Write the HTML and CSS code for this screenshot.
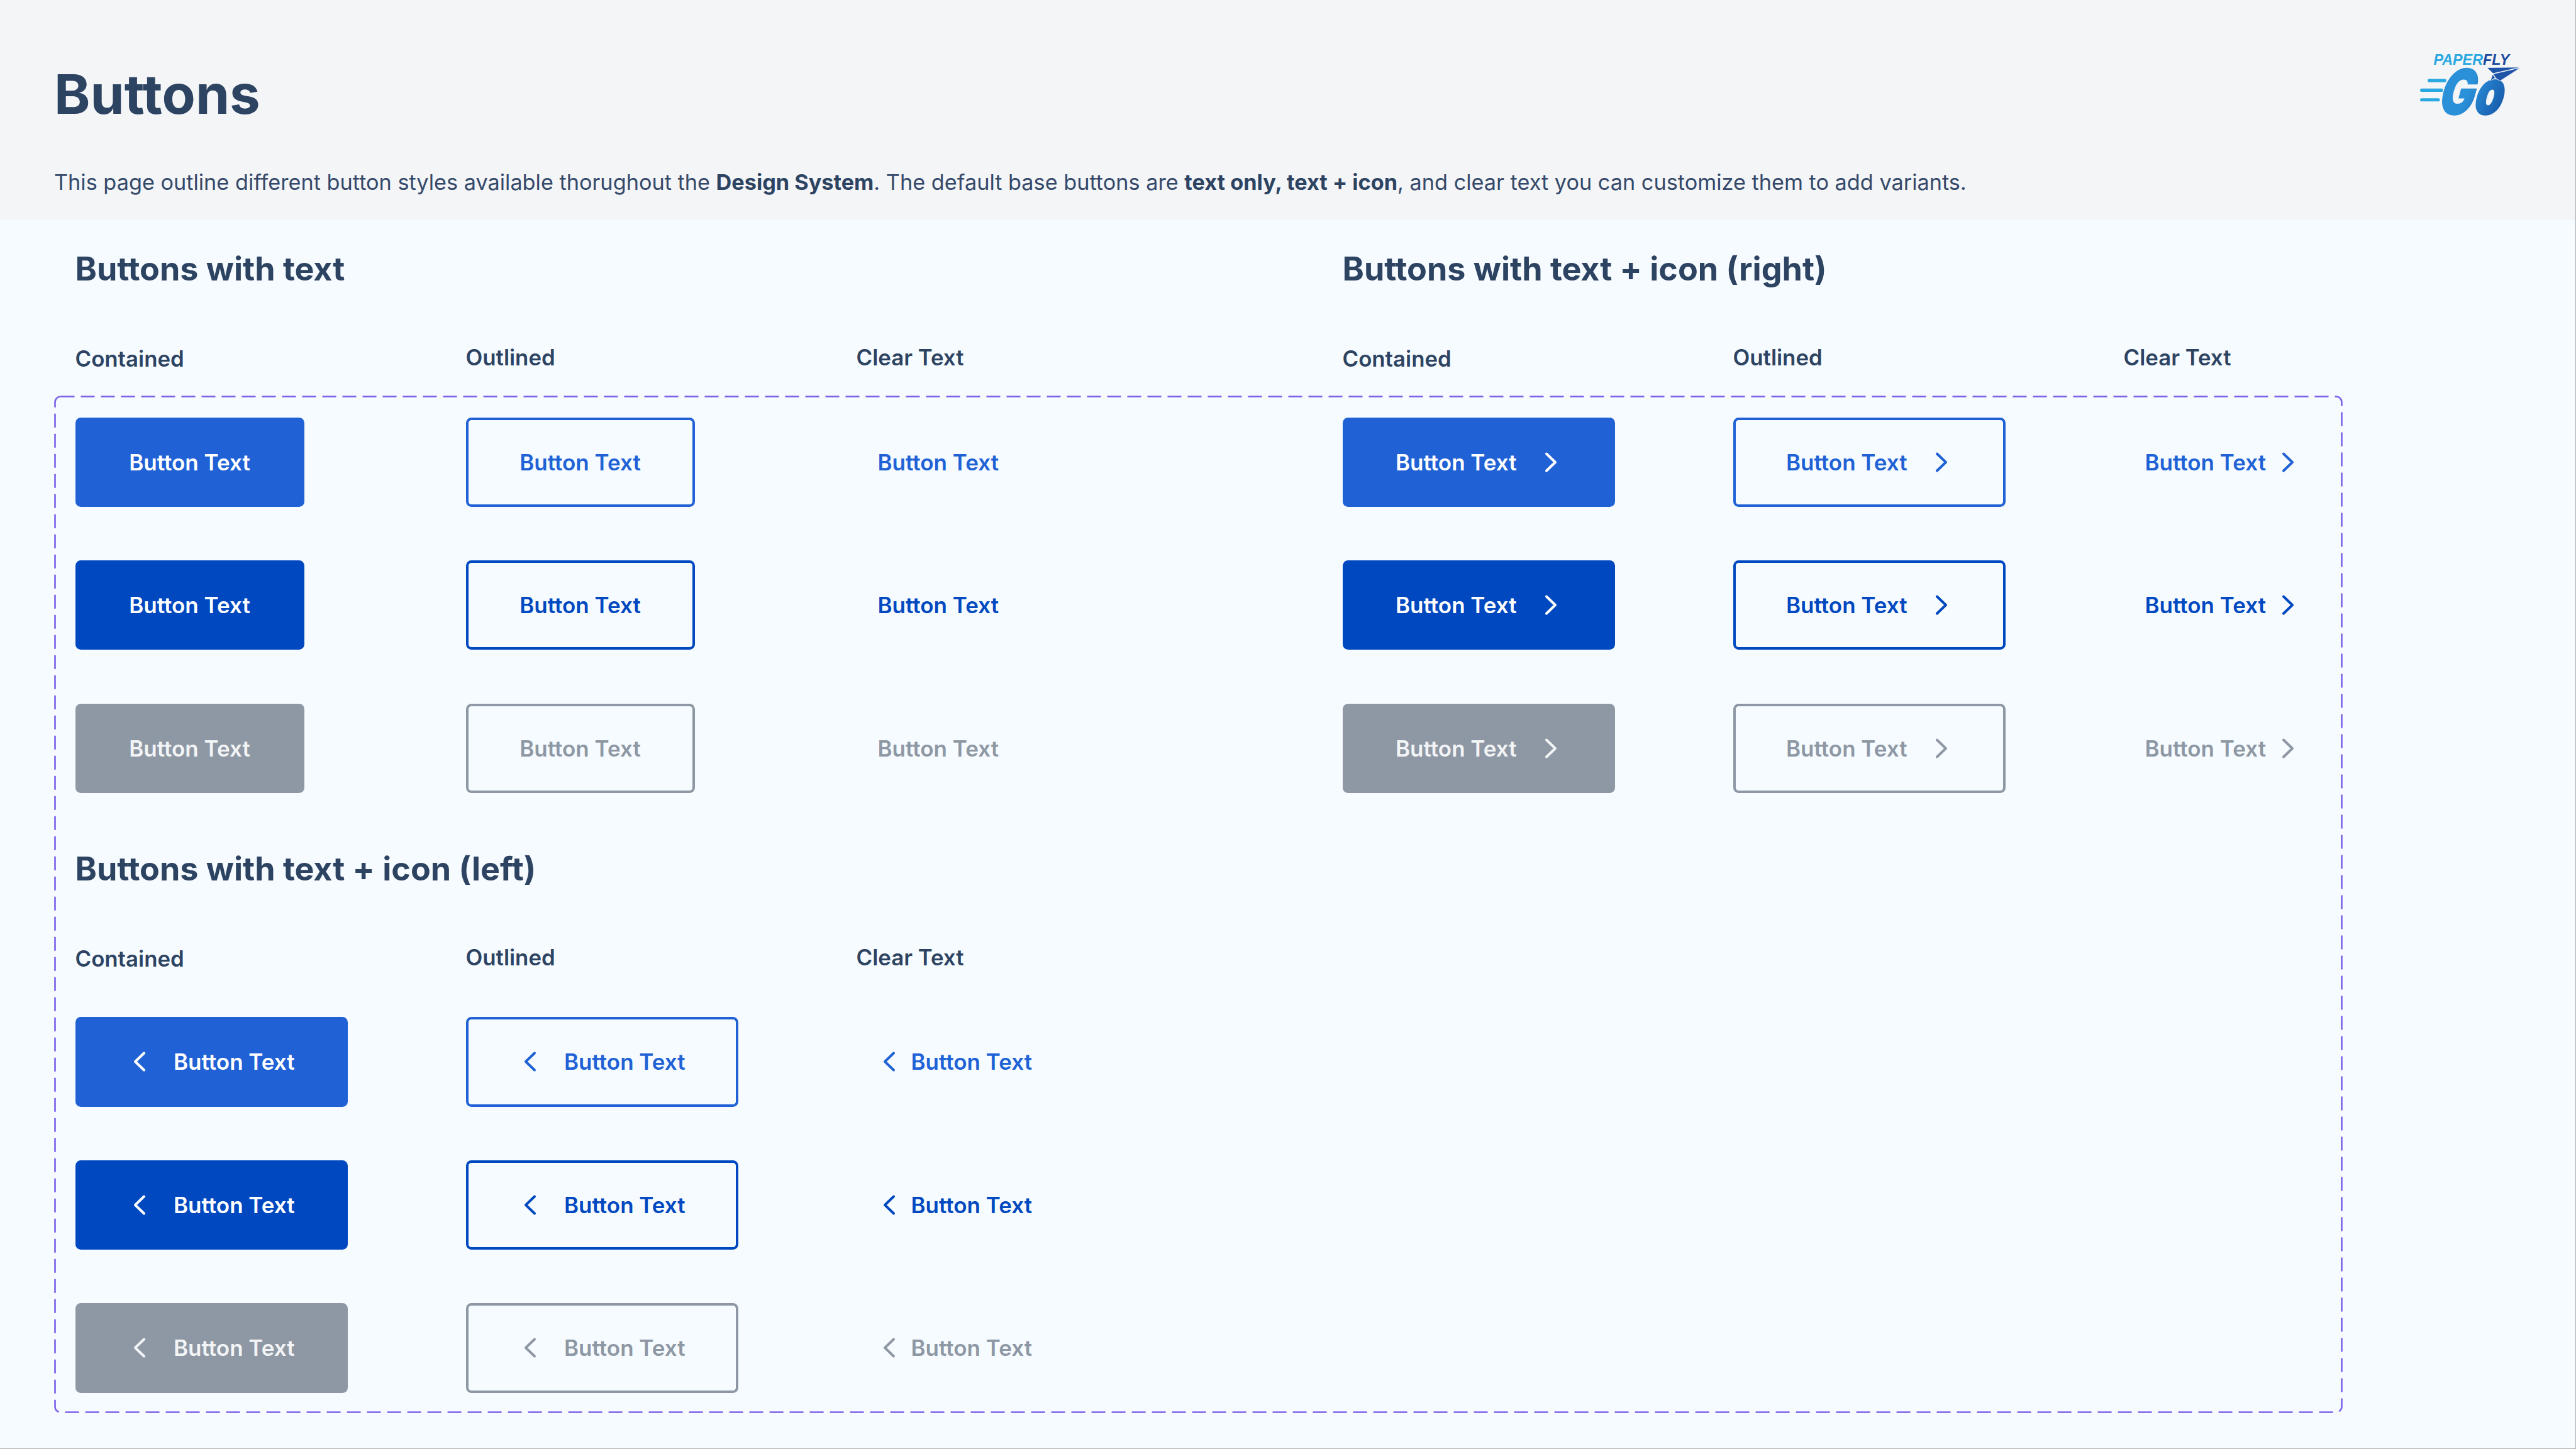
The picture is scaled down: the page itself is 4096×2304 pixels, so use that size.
FILE: index.html
```html
<!DOCTYPE html>
<html lang="en">
<head>
<meta charset="utf-8">
<title>Buttons</title>
<link rel="stylesheet" href="styles.css">
</head>
<body>
<svg width="0" height="0" class="defs">
  <defs>
    <symbol id="chev-r" viewBox="0 0 36 36"><path d="M11 4.5 L25 18 L11 31.5" fill="none" stroke="currentColor" stroke-width="4" stroke-linecap="round" stroke-linejoin="round"/></symbol>
    <symbol id="chev-l" viewBox="0 0 36 36"><path d="M25 4.5 L11 18 L25 31.5" fill="none" stroke="currentColor" stroke-width="4" stroke-linecap="round" stroke-linejoin="round"/></symbol>
  </defs>
</svg>
<div class="page">
  <header class="header">
    <div class="header-top">
      <h1 class="title">Buttons</h1>
      <svg class="logo" viewBox="0 -10 190 155" width="162" height="132" role="img" aria-label="Paperfly Go">
        <defs>
          <linearGradient id="go" gradientUnits="userSpaceOnUse" x1="38" y1="50" x2="170" y2="90">
            <stop offset="0" stop-color="#2A90D8"/>
            <stop offset="1" stop-color="#12479C"/>
          </linearGradient>
        </defs>
        <text class="logo-small" x="25" y="20" textLength="142" lengthAdjust="spacingAndGlyphs"><tspan fill="#2AA8E2">PAPER</tspan><tspan fill="#1B4B9E">FLY</tspan></text>
        <rect x="14" y="47" width="35" height="6" rx="3" fill="#2AA8E2"/>
        <rect x="0" y="65" width="43" height="6" rx="3" fill="#2AA8E2"/>
        <rect x="0" y="83" width="37" height="6" rx="3" fill="#2AA8E2"/>
        <text class="logo-go" transform="translate(30 113) skewX(-15) scale(.74 1)" fill="url(#go)" stroke="url(#go)">Go</text>
        <polygon points="124,25.7 189.3,25 149.3,50.7 140.7,45.3 131.3,50 136,37.3" fill="#1D54A8" stroke="#F4F5F7" stroke-width="1"/>
        <path d="M136 37.3 L189 25.2 M136 37.3 L124 25.7 M136 37.3 L140.7 45.3" stroke="#F4F5F7" stroke-width="1.6" fill="none"/>
      </svg>
    </div>
    <p class="desc">This page outline different button styles available thorughout the <b>Design System</b>. The default base buttons are <b>text only, text + icon</b>, and clear text you can customize them to add variants.</p>
  </header>

  <main class="content">
    <svg class="frame" width="3639" height="1618" viewBox="0 0 3639 1618" aria-hidden="true">
      <rect x="1.5" y="1.5" width="3636" height="1615" rx="9" fill="none" stroke="#7B61E8" stroke-width="2.6" stroke-dasharray="22 10"/>
    </svg>

    <section class="section">
      <h2 class="heading">Buttons with text</h2>
      <div class="cols">
        <div class="col">
          <div class="label label-low">Contained</div>
          <div class="stack">
            <div class="btn fill primary">Button Text</div>
            <div class="btn fill dark">Button Text</div>
            <div class="btn fill muted">Button Text</div>
          </div>
        </div>
        <div class="col">
          <div class="label">Outlined</div>
          <div class="stack">
            <div class="btn line primary">Button Text</div>
            <div class="btn line dark">Button Text</div>
            <div class="btn line muted">Button Text</div>
          </div>
        </div>
        <div class="col">
          <div class="label">Clear Text</div>
          <div class="stack">
            <div class="btn clear primary">Button Text</div>
            <div class="btn clear dark">Button Text</div>
            <div class="btn clear muted">Button Text</div>
          </div>
        </div>
      </div>
    </section>

    <section class="section">
      <h2 class="heading">Buttons with text + icon (right)</h2>
      <div class="cols">
        <div class="col">
          <div class="label label-low">Contained</div>
          <div class="stack">
            <div class="btn wide fill primary">Button Text<svg class="ico"><use href="#chev-r"/></svg></div>
            <div class="btn wide fill dark">Button Text<svg class="ico"><use href="#chev-r"/></svg></div>
            <div class="btn wide fill muted">Button Text<svg class="ico"><use href="#chev-r"/></svg></div>
          </div>
        </div>
        <div class="col">
          <div class="label">Outlined</div>
          <div class="stack">
            <div class="btn wide line primary">Button Text<svg class="ico"><use href="#chev-r"/></svg></div>
            <div class="btn wide line dark">Button Text<svg class="ico"><use href="#chev-r"/></svg></div>
            <div class="btn wide line muted">Button Text<svg class="ico"><use href="#chev-r"/></svg></div>
          </div>
        </div>
        <div class="col">
          <div class="label">Clear Text</div>
          <div class="stack">
            <div class="btn clear primary">Button Text<svg class="ico"><use href="#chev-r"/></svg></div>
            <div class="btn clear dark">Button Text<svg class="ico"><use href="#chev-r"/></svg></div>
            <div class="btn clear muted">Button Text<svg class="ico"><use href="#chev-r"/></svg></div>
          </div>
        </div>
      </div>
    </section>

    <section class="section section-lower">
      <h2 class="heading">Buttons with text + icon (left)</h2>
      <div class="cols">
        <div class="col">
          <div class="label label-low">Contained</div>
          <div class="stack">
            <div class="btn wide fill primary"><svg class="ico"><use href="#chev-l"/></svg>Button Text</div>
            <div class="btn wide fill dark"><svg class="ico"><use href="#chev-l"/></svg>Button Text</div>
            <div class="btn wide fill muted"><svg class="ico"><use href="#chev-l"/></svg>Button Text</div>
          </div>
        </div>
        <div class="col">
          <div class="label">Outlined</div>
          <div class="stack">
            <div class="btn wide line primary"><svg class="ico"><use href="#chev-l"/></svg>Button Text</div>
            <div class="btn wide line dark"><svg class="ico"><use href="#chev-l"/></svg>Button Text</div>
            <div class="btn wide line muted"><svg class="ico"><use href="#chev-l"/></svg>Button Text</div>
          </div>
        </div>
        <div class="col">
          <div class="label">Clear Text</div>
          <div class="stack">
            <div class="btn clear primary"><svg class="ico"><use href="#chev-l"/></svg>Button Text</div>
            <div class="btn clear dark"><svg class="ico"><use href="#chev-l"/></svg>Button Text</div>
            <div class="btn clear muted"><svg class="ico"><use href="#chev-l"/></svg>Button Text</div>
          </div>
        </div>
      </div>
    </section>
  </main>
</div>
</body>
</html>
```

FILE: styles.css
```css
* { box-sizing: border-box; }
html, body { margin: 0; padding: 0; }
body {
  width: 4096px;
  height: 2304px;
  overflow: hidden;
  background: #F6FBFF;
  font-family: Inter, "Liberation Sans", sans-serif;
  color: #2D4362;
}
.defs { position: absolute; }
.page {
  width: 4096px;
  height: 2304px;
  overflow: hidden;
  border-right: 1px solid #B0B0B0;
  border-bottom: 1px solid #B0B0B0;
}
.header {
  height: 350px;
  background: #F4F5F7;
  padding: 100px 85px 0 86px;
}
.header-top {
  display: flex;
  justify-content: space-between;
  align-items: flex-start;
  height: 100px;
}
.title {
  margin: 0;
  font-size: 87px;
  line-height: 100px;
  font-weight: 700;
  color: #2D4362;
}
.logo { margin-top: -23.5px; }
.logo-small {
  font-family: "Liberation Sans", sans-serif;
  font-weight: 700;
  font-style: italic;
  font-size: 28px;
}
.logo-go {
  font-family: Inter, sans-serif;
  font-weight: 900;
  font-size: 117px;
  stroke-width: 2px;
}
.desc {
  margin: 60px 0 0;
  font-size: 34.25px;
  line-height: 60px;
  font-weight: 400;
  color: #35496A;
  white-space: nowrap;
}
.desc b { font-weight: 700; color: #2D4362; }

.content {
  position: relative;
  display: grid;
  grid-template-columns: 2015px 1fr;
  grid-template-rows: auto auto;
  padding-left: 119.5px;
}
.frame {
  position: absolute;
  left: 86px;
  top: 279px;
}
.section { padding-top: 46px; }
.section-lower { padding-top: 89px; }
.heading {
  margin: 0 0 84px;
  font-size: 52px;
  line-height: 64px;
  font-weight: 700;
  color: #2D4362;
  white-space: nowrap;
}
.cols {
  display: grid;
  grid-template-columns: repeat(3, 621px);
}
.col { display: flex; flex-direction: column; }
.label {
  height: 48px;
  margin-bottom: 71.6px;
  font-size: 34.8px;
  line-height: 48px;
  font-weight: 600;
  color: #2D4362;
  white-space: nowrap;
}
.label-low { padding-top: 2px; }
.stack {
  display: flex;
  flex-direction: column;
  align-items: flex-start;
  gap: 85.3px;
}
.btn {
  display: flex;
  align-items: center;
  justify-content: center;
  gap: 36px;
  width: 364px;
  height: 142.2px;
  border-radius: 8.5px;
  font-size: 35px;
  font-weight: 600;
  white-space: nowrap;
}
.wide { width: 433.6px; }
.ico { width: 36px; height: 36px; flex: none; }

.fill { color: #fff; }
.fill.primary { background: #2062D5; }
.fill.dark { background: #0048C0; }
.fill.muted { background: #8E98A4; color: #F2F4F6; }

.line { border: 4.3px solid; }
.line.primary { color: #2062D5; border-color: #2062D5; }
.line.dark { color: #0048C0; border-color: #0048C0; }
.line.muted { color: #8E98A4; border-color: #8E98A4; }

.clear { width: auto; justify-content: flex-start; padding: 0 34px; gap: 17px; }
.clear.primary { color: #2062D5; }
.clear.dark { color: #0048C0; }
.clear.muted { color: #8E98A4; }
```
